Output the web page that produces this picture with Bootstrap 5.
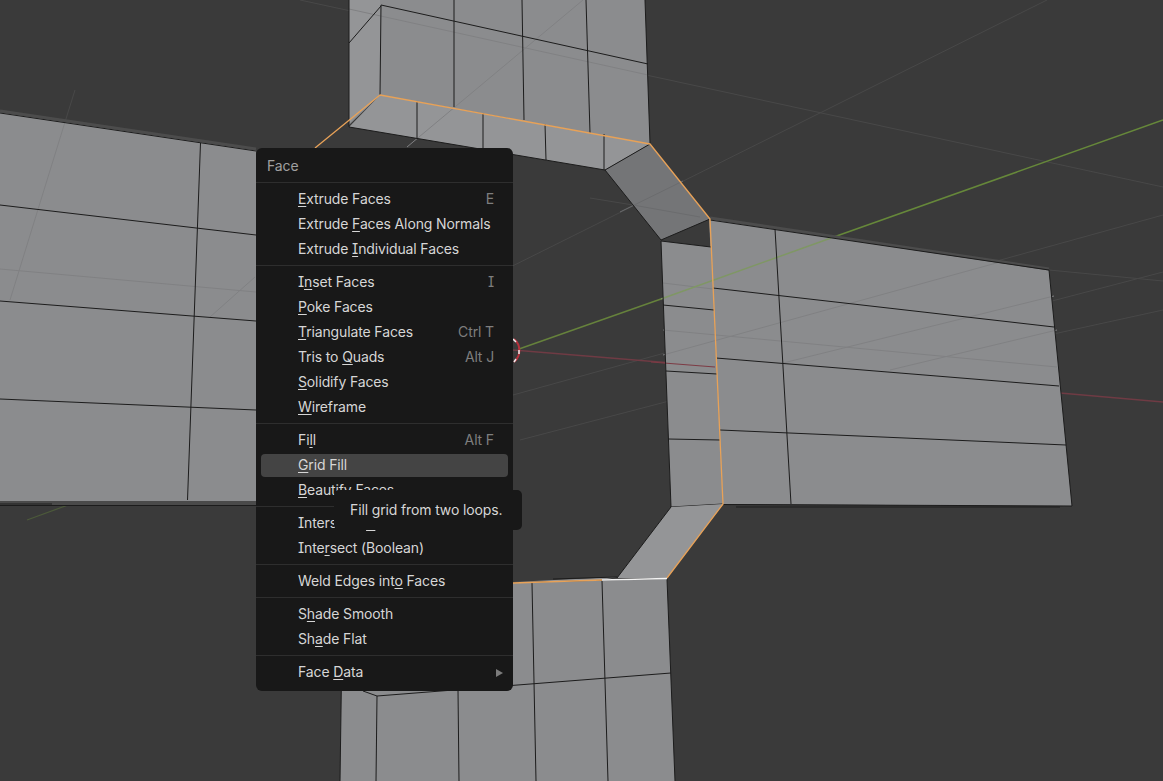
<!DOCTYPE html>
<html lang="en">
<head>
  <meta charset="UTF-8">
  <title>Face menu</title>
  <link href="https://cdn.jsdelivr.net/npm/bootstrap@5.3.2/dist/css/bootstrap.min.css" rel="stylesheet">
  <style>
    html, body { height: 100%; }
    body {
      background: #3a3a3a;
      overflow: hidden;
      font-family: Inter, "Liberation Sans", sans-serif;
      font-size: 14px;
      letter-spacing: -0.13px;
      font-feature-settings: "cv08";
    }
    .viewport-canvas { position: absolute; inset: 0; width: 1163px; height: 781px; }
    .face { fill: #8b8c8e; }
    .face-light { fill: #949597; }
    .face-dark { fill: #747577; }
    .edge { stroke: #1c1c1c; stroke-width: 1; fill: none; }
    .edge-band { stroke: #4c4c4c; stroke-width: 3; fill: none; }
    .grid-line { stroke: #484848; stroke-width: 1; fill: none; }
    .grid-over { stroke: #808183; stroke-width: 1; fill: none; }
    .sel { stroke: #e8a258; stroke-width: 1.3; fill: none; stroke-linejoin: round; }
    .menu-panel {
      position: absolute;
      left: 256px;
      top: 148px;
      width: 257px;
      padding: 5px 5px 6px;
      background: #181818;
      border-radius: 6px;
      color: #d6d6d6;
    }
    .menu-title { height: 26px; padding: 0 0 2px 6px; color: #a0a0a0; }
    .menu-sep { height: 8px; margin: 0 -5px; padding-top: 3px; }
    .menu-sep::before { content: ""; display: block; height: 1px; background: #2e2e2e; }
    .menu-row { height: 25px; padding: 0 14px 2px 37px; white-space: nowrap; }
    .menu-row u { text-underline-offset: 2px; text-decoration-thickness: 1px; }
    .menu-row.is-active {
      height: 23px;
      margin: 1px 0;
      background: #444444;
      border-radius: 4px;
    }
    .key-hint { color: #7e7e7e; }
    .sub-arrow { width: 0; height: 0; margin-right: -9px; margin-top: 2px; border-left: 7px solid #7c7c7c; border-top: 4px solid transparent; border-bottom: 4px solid transparent; }
    .tip-box {
      position: absolute;
      left: 334px;
      top: 490px;
      width: 188px;
      height: 40px;
      padding: 0 0 2px 16px;
      background: #181818;
      border-radius: 5px;
      color: #d6d6d6;
      white-space: nowrap;
    }
  </style>
</head>
<body>
  <!-- 3d viewport -->
  <svg class="viewport-canvas" viewBox="0 0 1163 781" xmlns="http://www.w3.org/2000/svg">
    <!-- floor grid -->
    <path class="grid-line" d="M300 0L1163 187M1047 0L400 322M1163 215L513 395M1163 272L520 440M1163 310L880 372M1049 270L1163 281M590 198L633 205M75 90L65 122"/>

    <!-- red / green axes -->
    <path d="M513 350L720 367M1060 393L1163 402" stroke="#6f3b44" stroke-width="1.3" fill="none"/>
    <path d="M519 349L661 299" stroke="#66823c" stroke-width="1.5" fill="none"/>
    <path d="M831 238L1163 120" stroke="#66883a" stroke-width="1.6" fill="none"/>
    <path d="M27 520L68 505" stroke="#4c5a3a" stroke-width="1.2" fill="none"/>

    <!-- origin gizmo -->
    <path d="M514 339A15 15 0 0 1 514 362" stroke="#b5303c" stroke-width="2" fill="none"/>
    <path d="M513 339L516 342M519 350L519 354M514 362L516 359" stroke="#eeeeee" stroke-width="1.5" fill="none"/>

    <!-- left block -->
    <polygon class="face" points="0,112 256,150 256,501 0,501"/>
    <path d="M0 501H256V506H0Z" fill="#4a4a4a"/>
    <path class="grid-over" d="M65 122L10 300M0 269L256 292M255 277L210 317"/>
    <path class="edge-band" d="M0 111L256 149"/>
    <path class="edge" d="M0 113L256 151M0 205L256 235M0 301L256 321M0 399L256 410M200.5 143L187.5 500M0 505.5H256M0 504H52"/>

    <!-- top block -->
    <polygon class="face" points="349,0 645,0 650,144 380,95 349,125"/>
    <polygon class="face-light" points="349,0 380,0 380,95 349,123"/>
    <polygon class="face-light" points="349,127 380,95 650,144 605,170"/>
    <path class="grid-over" d="M349 9L648 75M583 0L407 147"/>
    <path class="edge" d="M349 0V127M381 5L648 64M381 6L349 43M381 5L380 95M454 0V107M522 0L524 120M586 0L590 133M645 0L650 143M349 127L605 170M417 101V139M483 113V160M545 124L546 160M604 134V170"/>

    <!-- slanted bridge top right -->
    <polygon class="face-dark" points="650,144 710,219 661,240 605,170"/>
    <path d="M633 205L700 217M620 212L683 181" stroke="#6b6c6e" fill="none"/>
    <path d="M605 170L661 240L710 219" class="edge"/>
    <path d="M650 144L605 170" class="edge"/>

    <!-- right block -->
    <polygon class="face" points="709,219 1049,270 1072,506 723,504"/>
    <polygon class="face" points="661,241 711,247 723,504 671,507"/>
    <path class="grid-over" d="M1000 262L663 355M1054 296L783 363M1057 330L890 370M663 283L713 289M663 330L1057 367"/>
    <path d="M661 299L831 238" stroke="#7f9764" stroke-width="1.5" fill="none"/>
    <path d="M651 362L715 367" stroke="#7d3b45" stroke-width="1.2" fill="none"/>
    <path class="edge-band" d="M710 218L1049 269" stroke-width="2"/>
    <path class="edge" d="M710 220L1049 270L1072 506L723 504.5M713 288L1054 327M716 358L1059 386M720 430L1066 445M775 229L791 504M661 241L711 247M661 241L671 507L723 504M663 305L714 310M666 371L717 374M668 439L720 440M736 507L1060 507"/>

    <!-- lower bridge -->
    <polygon class="face-light" points="671,507 723,504 667,578 617,578"/>
    <path class="edge" d="M671 507L617 578"/>

    <!-- bottom block -->
    <polygon class="face" points="342,640 513,583 667,579 675,781 340,781"/>
    <polygon class="face-light" points="513,582 617,577 602,580"/>
    <path class="edge" d="M342 640L340 781M553 579L617 577M377 696L671 673M363 691L377 696M377 696L376 781M458 690L459 781M532 583L536 781M602 581L608 781M667 579L675 781"/>

    <!-- selected edge loop -->
    <path class="sel" d="M315 148L380 95L650 144L710 219L723 504L667 578"/>
    <path class="sel" d="M513 583L602 580"/>
    <path d="M602 580L667 578.5" stroke="#f4f4f4" stroke-width="1.5" fill="none"/>
  </svg>

  <!-- context menu -->
  <div class="menu-panel">
    <div class="menu-title d-flex align-items-center">Face</div>
    <div class="menu-sep"></div>
    <div class="menu-row d-flex align-items-center justify-content-between"><span><u>E</u>xtrude Faces</span><span class="key-hint">E</span></div>
    <div class="menu-row d-flex align-items-center justify-content-between"><span>Extrude <u>F</u>aces Along Normals</span></div>
    <div class="menu-row d-flex align-items-center justify-content-between"><span>Extrude <u>I</u>ndividual Faces</span></div>
    <div class="menu-sep"></div>
    <div class="menu-row d-flex align-items-center justify-content-between"><span>I<u>n</u>set Faces</span><span class="key-hint">I</span></div>
    <div class="menu-row d-flex align-items-center justify-content-between"><span><u>P</u>oke Faces</span></div>
    <div class="menu-row d-flex align-items-center justify-content-between"><span><u>T</u>riangulate Faces</span><span class="key-hint">Ctrl T</span></div>
    <div class="menu-row d-flex align-items-center justify-content-between"><span>Tris to <u>Q</u>uads</span><span class="key-hint">Alt J</span></div>
    <div class="menu-row d-flex align-items-center justify-content-between"><span><u>S</u>olidify Faces</span></div>
    <div class="menu-row d-flex align-items-center justify-content-between"><span><u>W</u>ireframe</span></div>
    <div class="menu-sep"></div>
    <div class="menu-row d-flex align-items-center justify-content-between"><span>Fi<u>l</u>l</span><span class="key-hint">Alt F</span></div>
    <div class="menu-row is-active d-flex align-items-center justify-content-between"><span><u>G</u>rid Fill</span></div>
    <div class="menu-row d-flex align-items-center justify-content-between"><span><u>B</u>eautify Faces</span></div>
    <div class="menu-sep"></div>
    <div class="menu-row d-flex align-items-center justify-content-between"><span>Intersect (<u>K</u>nife)</span></div>
    <div class="menu-row d-flex align-items-center justify-content-between"><span>Inte<u>r</u>sect (Boolean)</span></div>
    <div class="menu-sep"></div>
    <div class="menu-row d-flex align-items-center justify-content-between"><span>Weld Edges int<u>o</u> Faces</span></div>
    <div class="menu-sep"></div>
    <div class="menu-row d-flex align-items-center justify-content-between"><span>S<u>h</u>ade Smooth</span></div>
    <div class="menu-row d-flex align-items-center justify-content-between"><span>Sh<u>a</u>de Flat</span></div>
    <div class="menu-sep"></div>
    <div class="menu-row d-flex align-items-center justify-content-between"><span>Face <u>D</u>ata</span><span class="sub-arrow"></span></div>
  </div>

  <!-- tooltip over the menu -->
  <div class="tip-box d-flex align-items-center">Fill grid from two loops.</div>

  <script src="https://cdn.jsdelivr.net/npm/bootstrap@5.3.2/dist/js/bootstrap.bundle.min.js"></script>
</body>
</html>
